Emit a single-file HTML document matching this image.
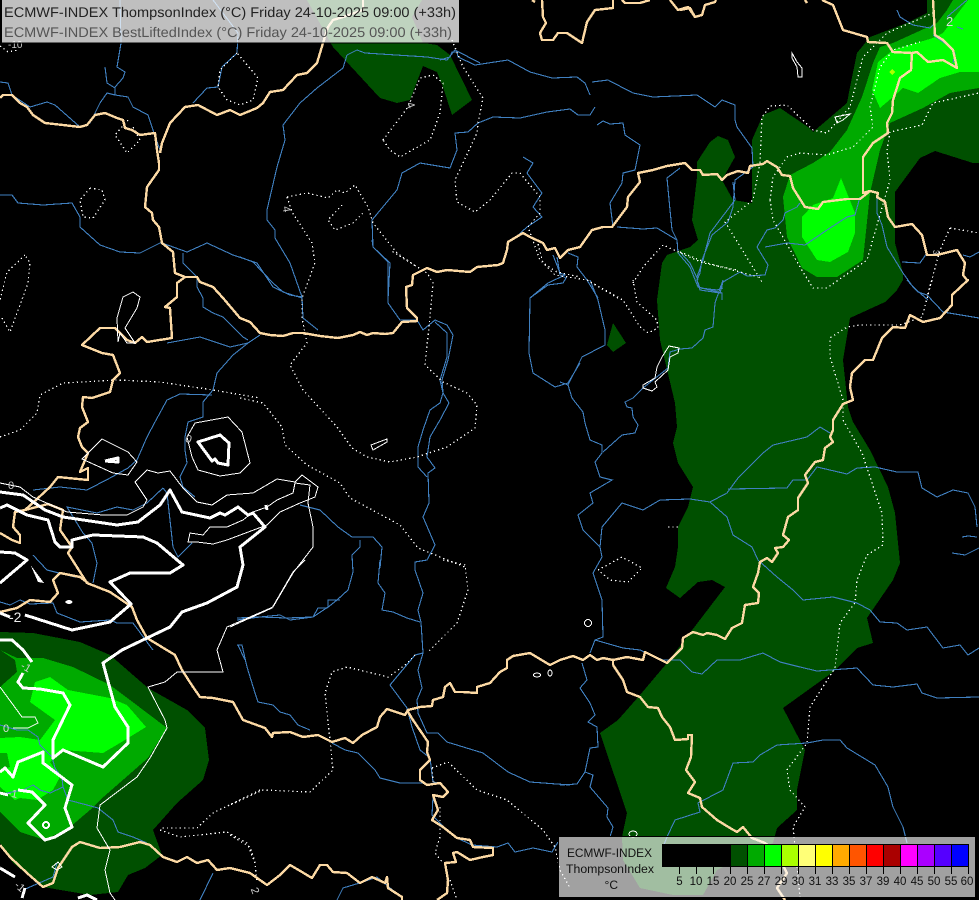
<!DOCTYPE html>
<html><head><meta charset="utf-8"><title>ECMWF-INDEX ThompsonIndex</title>
<style>
html,body{margin:0;padding:0;background:#000;width:979px;height:900px;overflow:hidden}
svg{display:block}
text{font-family:"Liberation Sans",sans-serif}
.b polyline{fill:none;stroke:#fcd9a4;stroke-width:2.4;stroke-linejoin:round}
.r polyline{fill:none;stroke:#4080c0;stroke-width:1.1}
.tk polyline,.tk polygon{fill:none;stroke:#fff;stroke-width:3;stroke-linejoin:round}
.tn polyline,.tn polygon{fill:none;stroke:#fff;stroke-width:1}
.d polyline{fill:none;stroke:#fff;stroke-width:1.3;stroke-dasharray:1.3 3}
.l text{fill:#ccc;font-size:11px}
</style></head><body>
<svg width="979" height="900" viewBox="0 0 979 900" xmlns="http://www.w3.org/2000/svg" shape-rendering="crispEdges">
<rect width="979" height="900" fill="#000"/>
<!-- dark green -->
<g fill="#005000">
<polygon points="307,0 422,0 412,17 423,43 437,45 450,55 472,100 452,115 443,87 437,72 423,66 410,100 397,103 380,98 333,47"/>
<polygon points="927,0 927,13 907,23 870,37 857,53 850,87 847,103 813,132 808,127 780,108 763,115 752,140 752,203 733,200 722,180 735,157 728,140 718,136 710,142 697,162 697,177 692,220 698,240 690,247 667,255 662,263 657,300 660,340 675,403 677,427 673,443 678,463 693,487 688,507 678,527 678,547 675,567 666,588 680,598 698,582 712,580 725,587 667,663 640,695 618,720 600,733 627,813 622,837 623,860 640,888 673,895 703,895 717,870 773,843 777,828 797,810 797,790 805,750 783,708 833,672 857,648 873,643 867,618 893,580 900,563 895,513 888,487 870,450 853,422 848,407 843,360 850,318 885,302 897,290 903,280 903,273 895,243 895,192 920,158 935,151 973,163 979,163 979,0"/>
<polygon points="613,323 626,343 613,352 607,345"/>
<polygon points="0,632 33,633 80,642 110,655 148,688 187,710 205,728 209,760 203,780 177,803 153,830 162,855 145,868 128,875 118,892 90,895 43,887 13,863 0,843"/>
</g>
<!-- mid green -->
<g fill="#00aa00">
<polygon points="953,0 947,10 937,23 893,43 880,47 873,63 862,97 847,130 830,152 813,163 790,175 783,197 787,237 802,268 817,277 837,277 863,260 870,193 880,150 890,123 923,108 950,93 967,90 979,88 979,0"/>
<polygon points="0,650 17,658 43,658 73,667 110,685 130,700 167,728 148,758 100,800 90,810 70,827 45,840 20,832 0,812"/>
</g>
<polygon fill="#005000" points="0,650 15,660 17,672 0,687"/>
<!-- bright -->
<g fill="#00ff00">
<polygon points="968,0 943,33 933,38 893,50 878,62 872,90 880,108 893,97 903,88 918,93 940,78 960,72 979,72 979,0"/>
<polygon points="841,178 833,198 813,205 802,217 802,237 817,260 830,262 848,252 855,233 855,213"/>
<polygon points="35,682 50,677 68,690 110,698 127,705 146,727 120,743 103,753 63,750 50,762 60,777 53,790 37,800 20,798 15,800 0,787 0,770 10,767 7,753 0,753 0,738 20,737 40,740 55,720 30,702"/>
</g>
<polygon fill="#aaff00" points="892,69 895,72 892,75 889,72"/>

<!-- rivers -->
<g class="r">
<polyline points="0,82 8,83 12,95 30,107 47,102 55,105 80,127 90,123 100,103 107,93 115,95 128,97 133,107 148,115 153,130 160,150"/>
<polyline points="115,95 115,87 123,78 125,72 117,67 121,43 120,0"/>
<polyline points="105,67 107,83 115,88"/>
<polyline points="193,103 207,88 218,87 222,67 237,53 238,33 213,0"/>
<polyline points="0,195 12,195 18,203 43,205 72,203 80,217 80,227 100,245 120,252 140,253 160,243 162,243 187,252 207,243 233,255 257,263 273,287 290,295 302,297"/>
<polyline points="183,253 183,263 197,277 197,287 203,298 203,307 213,313 223,317 233,327 243,337 248,340"/>
<polyline points="167,343 200,337 230,347 248,343 260,335"/>
<polyline points="248,343 233,355 217,373 213,390 203,402 203,417 188,422 185,437 185,450 187,463 180,477 183,487 195,497"/>
<polyline points="212,395 180,394 167,400 155,422 147,437 137,460 128,468 110,478 87,490 60,487 33,490"/>
<polyline points="163,488 147,503 133,510 117,507 97,513 67,507 83,533 92,543 97,563 93,583"/>
<polyline points="163,488 167,493 173,547 178,557 192,543"/>
<polyline points="0,602 10,605 20,600 30,604 53,603 57,613 80,622 110,620 117,623 133,623 147,642 153,650"/>
<polyline points="33,555 47,570 75,577"/>
<polyline points="237,620 260,617 287,618 313,617 328,607 328,600 340,600"/>
<polyline points="300,505 320,510 338,527 352,537 373,537 382,547 380,568"/>
<polyline points="360,540 360,547 352,555 353,572 348,590 337,600 327,608 318,608 313,617 290,620 280,615 260,617 237,618"/>
<polyline points="380,560 378,583 385,593 382,610 393,612 407,618 420,622"/>
<polyline points="372,240 373,247 388,262 388,303 400,320 417,320 423,330 435,320 447,325 453,335 448,360 442,380 443,393 449,403 440,420 430,437 427,457 435,468 428,473 429,503 423,517 435,545 427,560 415,562 415,570 423,593 418,610 421,622 423,653 418,670 422,688 417,700 418,713 427,733 438,733 447,742 483,753 508,772 530,782 570,785"/>
<polyline points="435,322 447,333 447,357 440,380 443,393 440,403 430,410 423,430 418,447 418,467 427,477"/>
<polyline points="415,655 390,685 407,708 412,727 420,750 430,758 433,782 440,783"/>
<polyline points="423,653 415,655"/>
<polyline points="237,645 242,645 247,667 255,693 258,702 273,705 280,712 290,715 298,725 310,730"/>
<polyline points="332,743 345,750 358,753 375,770 380,778 400,783 423,783"/>
<polyline points="433,797 432,815 447,830 457,838 472,845 497,847 508,843 515,852 533,848 552,852 558,842"/>
<polyline points="337,900 343,888 363,882 377,877 390,888 402,897"/>
<polyline points="553,255 560,273 565,275 548,283 530,298 529,353 533,373 555,387 568,383 580,363"/>
<polyline points="560,382 568,385 582,357 605,345 605,330 598,300 590,280"/>
<polyline points="568,385 572,398 583,412 585,423 590,440 602,445 602,453 595,462 600,477 612,480 590,493 593,503 578,515 583,530 600,547 602,557 593,573 602,600 603,637 595,640 590,653"/>
<polyline points="600,547 602,527 622,503 643,510 660,500 690,499 710,502 727,493 738,478 763,453 773,445 807,437 820,427 830,433"/>
<polyline points="728,489 787,488 793,480 807,480 817,467 847,474 857,468 875,467 897,472 918,472 922,488 937,497 953,490 968,493 975,507 977,527"/>
<polyline points="962,537 968,536 977,537"/>
<polyline points="952,553 965,555 979,548"/>
<polyline points="710,502 727,517 733,535 752,547 758,560 777,577 793,590 803,600 833,597 857,603 870,610 880,622 897,623 907,630 927,627 943,648 960,645 968,655 979,648"/>
<polyline points="595,640 623,648 640,650 663,660 680,660 692,672 702,674 717,660 740,660 763,653 780,662 800,667 817,671 857,668 873,685 893,687 917,684 922,693 937,698 979,697"/>
<polyline points="582,663 587,680 580,688 590,703 595,715 588,722 597,727 598,747 590,748 585,772 593,775 590,787 608,808 607,817 613,827 610,837"/>
<polyline points="560,785 577,784 585,772"/>
<polyline points="807,743 777,745 760,755 753,762 733,763 723,790 698,803 700,812 675,820 667,837 663,847"/>
<polyline points="807,743 823,740 840,740 847,748 875,765 888,787 893,807 903,827 907,843"/>
<polyline points="440,60 450,57 452,52 457,52 458,57 475,65 508,60 530,72 552,78 577,77 585,83 590,95"/>
<polyline points="592,82 608,80 633,93 653,97 697,95 715,107 722,100 735,105 735,120 737,127 752,148 753,167 735,180 733,207 728,222 712,235 702,260 700,273 697,280 700,290 720,293 723,282 740,272 747,276 765,275 768,265 757,247 767,230 775,228 783,220 785,213 797,207 800,203"/>
<polyline points="347,55 357,50 365,53 427,57 447,60 455,50 480,63"/>
<polyline points="347,55 343,68 317,88 300,103 283,125 285,140 277,167 267,210 267,220 275,230 275,238 290,263 302,297 303,318 318,330"/>
<polyline points="240,257 253,262 273,283 283,292 302,298"/>
<polyline points="372,220 373,247 390,263 388,300"/>
<polyline points="372,220 397,190 402,173 420,163 450,168 457,150 455,133 468,132 478,123 493,117 520,118 547,112 570,109 578,115 590,115 595,107"/>
<polyline points="597,125 603,121 610,124 623,123 625,135 640,145 635,170 623,173 622,183 610,203 613,227"/>
<polyline points="523,157 533,163 527,173 542,193 533,207 542,217 527,227 515,238"/>
<polyline points="617,227 643,229 657,228 677,240 678,253 690,267 698,287 722,293 722,300"/>
<polyline points="680,168 667,178 670,210 672,230 677,240"/>
<polyline points="733,182 735,200 710,233 703,260 697,277"/>
<polyline points="557,257 560,275 566,278 563,283 548,285 530,298"/>
<polyline points="568,253 578,257 577,267 587,280 598,298"/>
<polyline points="680,252 690,263 698,280"/>
<polyline points="765,247 787,243 805,245 827,230 847,217 855,215 860,197"/>
<polyline points="877,197 877,213 882,225 887,247 903,273 913,287 928,300"/>
<polyline points="907,280 918,292 927,295 943,312 979,318"/>
<polyline points="963,255 970,257 979,252"/>
<polyline points="902,262 920,263 927,253"/>
<polyline points="723,280 715,303 713,327 705,330 703,338 692,348 680,349 670,352 668,368 653,380 643,388 633,398 625,402 627,407 632,408 633,417 638,425 635,433 622,435 603,452"/>
<polyline points="697,280 700,288 717,290 723,288"/>
<polyline points="897,10 900,17 913,25 930,28 935,23"/>
<polyline points="933,35 950,47 955,53 953,63"/>
<polyline points="947,17 967,0"/>
<polyline points="957,27 963,29"/>
<polyline points="0,725 17,730 28,730 38,737 40,745 52,757 55,768 62,778 63,787 50,793 40,790 33,785 23,790 7,793 0,793"/>
<polyline points="63,787 68,800 87,805 98,808 113,820 118,832 133,837 147,843"/>
<polyline points="57,863 53,877 23,890"/>
<polyline points="213,873 200,900"/>
<polyline points="238,645 245,660"/>
</g>

<!-- dotted -->
<g class="d">
<polyline points="237,53 220,70 218,87 227,100 240,105 253,100 258,78 237,53"/>
<polyline points="128,120 115,135 127,153 140,140 133,127"/>
<polyline points="90,188 80,200 83,217 93,218 105,200 102,190 90,188"/>
<polyline points="25,255 7,272 0,300"/>
<polyline points="2,318 10,332 28,283 30,263 25,255"/>
<polyline points="287,197 307,193 328,198 337,190 345,193 355,185 368,207 373,223 397,253 417,267"/>
<polyline points="342,205 328,220 335,230 353,223 363,213"/>
<polyline points="287,197 292,212 312,243 315,263 302,298 302,318 307,343 290,365 303,390 337,427 352,448 367,457 390,462 417,457 447,447 475,428 477,405 467,393 443,382 425,365 430,317 433,283 427,273 390,250"/>
<polyline points="383,140 408,107 420,78 433,75 443,83 440,113 430,140 400,157 390,150 383,140"/>
<polyline points="452,40 463,67 483,98 478,123 477,133 455,180 457,202 475,212 490,200 512,173 520,173 540,197 540,213 528,227 540,260 555,275 587,280 618,298"/>
<polyline points="537,240 543,263 557,272 580,277"/>
<polyline points="633,283 643,267 663,245 703,263 737,270"/>
<polyline points="587,280 623,300 640,327 648,333 658,328 657,320 637,302 633,280"/>
<polyline points="760,163 762,117 770,106 787,105 813,130 827,133 850,107 863,57 887,33 933,13"/>
<polyline points="760,163 753,200 725,222 762,282"/>
<polyline points="680,252 707,263 740,272 758,277"/>
<polyline points="770,200 773,177 787,157 800,153 827,155 853,147 873,127 870,107 880,67 893,50 920,42"/>
<polyline points="770,200 773,220 800,267 813,288 827,288 867,260 890,180 887,150 890,132 922,125 933,103 979,93"/>
<polyline points="950,228 940,250 927,297"/>
<polyline points="950,228 979,233"/>
<polyline points="932,280 922,317 900,325 860,325 847,327 830,338 830,357 843,400 843,420 862,453 882,513 883,545 867,555 857,580 855,603 840,623 835,668 810,707 807,743 787,770 790,790 805,807 793,827 800,897"/>
<polyline points="668,527 680,527"/>
<polyline points="598,570 622,557 642,568 628,582 610,580 598,570"/>
<polyline points="443,560 465,565 468,590 457,623 427,653"/>
<polyline points="240,398 263,403 282,427 285,445 307,465 340,483 350,498 400,525 418,548 467,568"/>
<polyline points="0,437 20,430 37,413 40,395 63,383 117,380 160,382 213,390 260,398"/>
<polyline points="415,655 405,665 388,677 347,667 332,672 325,693 330,740 333,770 310,792 263,790 230,805"/>
<polyline points="230,835 250,847 255,862 257,883"/>
<polyline points="260,790 213,813 197,828 160,828"/>
<polyline points="160,830 180,837 227,832 247,843 255,863"/>
<polyline points="432,768 448,762 477,790 507,800 543,830 555,847 560,870 570,888"/>
<polyline points="440,807 440,837 435,853 443,863"/>
<polyline points="450,880 457,900"/>
<polyline points="432,768 433,782"/>
<polyline points="0,46 8,52 18,50"/>
</g>

<!-- borders -->
<g class="b">
<polyline points="0,98 3,95 12,95 20,103 27,107 33,115 45,123 63,125 80,127 87,125 95,115 105,113 117,118 123,120 125,128 132,130 140,135 155,133 157,150 159,163 159,170 147,187 145,207 152,213 153,220 159,227 162,243 173,252 175,273 185,277 197,277 200,282 213,287 223,298 240,318 250,322 260,333 270,335 283,336 293,333 303,333 320,336 338,338 353,335 360,332 367,335 373,333 385,334 393,333 402,322 417,321 417,318 407,308 406,287 412,285 413,275 427,268 437,272 447,270 470,272 477,267 498,265 503,263 507,250 508,242 523,233 530,237 543,243 547,250 555,248 560,258 568,250 580,247 592,230 603,227 612,227 627,207 628,197 640,182 638,173 653,170 667,166 685,163 692,170 700,170 703,175 717,174 722,180 727,175 738,171 748,173 750,166 763,164 767,161 777,167 782,175 790,176 793,188 805,207 818,209 823,202 847,199 860,199 870,191 878,193 877,197 885,202 888,217 895,227 912,224 922,235 927,255 937,255 957,250 965,263 963,275 967,280 968,280 952,295 952,305 940,318 923,322 910,315 905,328 893,327 882,338 873,360 865,360 852,373 850,387 853,400 843,404 833,420 833,430 830,437 833,442 825,448 823,460 815,462 805,475 808,483 798,498 798,510 788,517 783,535 789,540 783,547 775,548 778,553 772,562 767,558 760,562 758,573 753,587 759,593 758,603 745,605 742,623 732,628 725,639 717,635 707,633 703,635 693,632 683,638 682,648 667,663 657,658 645,652 643,660 627,657 613,660 603,658 597,660 590,655 583,660 573,656 560,660 550,665 530,653 513,656 507,660 507,668 500,672 490,683 477,687 477,693 463,692 455,692 450,683 445,687 443,697 433,700 432,706 420,707 408,710 405,715 387,709 380,717 377,727 362,735 353,743 345,738 332,742 318,735 303,737 290,732 273,733 272,737 265,728 243,720 233,702 213,698 200,697 193,687 182,670 175,655 147,638 137,620 132,607 110,592 87,583 68,553 72,547 60,530 63,510 48,504 25,510 50,487 58,477 88,480 88,468 80,472 88,453 82,447 78,437 80,428 88,422 82,407 83,397 92,398 110,392 113,380 120,373 113,355 102,353 82,345 100,328 115,328 127,340 135,343 142,337 147,342 172,338 170,308 165,307 177,297 177,283 185,277"/>
<polyline points="0,533 12,540 20,543 20,535 13,527 15,512 25,510"/>
<polyline points="0,612 17,608 30,600 50,602 58,593 53,580 60,573 80,577 88,583"/>
<polyline points="613,665 623,680 627,692 640,697 648,707 658,708 662,717 670,727 675,740 688,739 688,735 692,735 691,757 686,770 695,782 688,793 700,798 702,807 717,820 730,828 737,832 743,827 752,838 765,843 775,850 787,873 777,888 785,900"/>
<polyline points="613,660 613,665"/>
<polyline points="0,845 10,857 27,873 43,887 53,883 58,868 72,847 80,842 100,848 120,847 140,842 150,845 163,857 177,862 187,857 197,863 208,860 217,870 230,868 250,873 267,885 280,875 290,865 302,872 312,878 320,865 327,865 333,872 347,873 360,883 372,877 385,883 387,877 388,888 402,897 402,900"/>
<polyline points="407,710 413,720 428,742 427,752 430,760 420,770 420,780 427,785 440,783 448,792 443,797 433,795 438,810 432,820 443,827 457,838 470,840 473,847 493,848 493,855 483,857 470,860 457,852 453,853 456,862 445,863 448,880 447,893 437,900"/>
<polyline points="822,0 833,5 843,30 867,37 868,42 887,43 893,52 912,53 917,52 928,62 943,60 957,68 953,50 943,40 935,35 933,0"/>
<polyline points="912,53 911,70 900,78 893,100 892,113 887,123 888,133 873,143 863,157 863,193 870,191"/>
<polyline points="680,10 690,8 695,17 702,15 705,5 715,2 716,0"/>
<polyline points="532,0 535,2"/>
<polyline points="805,0 807,3"/>
<polyline points="542,0 543,17 546,23 540,33 542,40 553,40 558,33 567,33 582,43 587,22 595,10 613,8 613,0"/>
<polyline points="622,0 625,3 640,3 650,0"/>
<polyline points="670,0 678,10 688,7 695,17"/>
<polyline points="363,0 363,10 343,17 333,20 328,27 323,43 317,63 307,73 297,75 283,90 270,92 263,103 257,108 240,115 230,110 217,115 198,105 185,107 170,123 162,143 160,153"/>
</g>

<!-- thick white contours -->
<g class="tk">
<polyline points="0,492 23,495 45,510 63,517 117,525 138,522 147,515 160,505 170,490 182,512 210,518 220,513 225,515 238,507 248,515 253,513 265,527 240,547 243,565 237,587 207,603 182,612 170,627 147,638 122,650 103,663 115,707 128,727 128,743 103,767 63,750 53,758 53,740 70,705 63,693 40,689 23,688 18,682 23,673"/>
<polyline points="0,508 7,505 27,515 48,520 55,542 60,547 72,547 72,540 93,535 143,537 157,543 183,565 170,573 130,573 110,582 131,604 110,622 72,630 25,615"/>
<polyline points="0,552 15,553 27,560 0,583"/>
<polyline points="0,613 10,617"/>
<polygon points="198,442 220,435 229,443 228,465 218,463 215,459 212,461"/>
<polyline points="105,461 118,458 118,462 105,461"/>
<polyline points="0,640 12,640 23,650 32,662"/>
<polyline points="0,772 5,768 13,777 18,762 43,752 43,763 72,785 65,808 72,827 55,837 45,840 28,823 45,805 32,792 18,790"/>
<polyline points="0,868 15,877"/>
<polyline points="22,898 25,888"/>
<polyline points="78,898 87,895 97,900"/>
<polyline points="0,793 8,795"/>
<polyline points="266,505 267,510"/>
</g>
<polygon fill="#fff" points="31,566 38,582 44,583 32,567"/>
<ellipse cx="69" cy="602" rx="3.5" ry="2" fill="#fff"/>
<circle cx="46" cy="825" r="3" fill="none" stroke="#fff" stroke-width="2"/>

<!-- thin white contours -->
<g class="tn">
<polygon points="82,459 102,439 128,452 137,462 128,475 113,473"/>
<polyline points="0,483 20,487 33,497 67,512 103,515 127,515 143,507 147,500 135,482 147,470 158,473 170,471 183,488 197,502 212,505 227,495 253,493 277,479 295,482 302,475 318,487 315,497 300,503 280,512 267,525 227,540 213,544 197,542 188,542 190,533 203,535 210,527 227,527 243,520 253,512 267,507 277,500 293,493 295,483 310,485 308,503 313,527 313,547 293,573 273,607 227,627 217,650 223,672 193,672 177,672 165,682 148,687 165,720 167,728 150,758 137,777 100,805 97,828 110,850 105,870 110,893 115,900"/>
<polyline points="230,627 272,608 293,572 305,560"/>
<polygon points="187,437 195,423 228,417 242,432 250,463 240,473 220,476 198,470 192,457"/>
<polyline points="0,687 22,717 35,717 38,723 28,728 13,728"/>
<polygon points="52,867 58,862 62,867 57,870"/>
<polygon points="792,53 797,62 802,68 802,77 798,77 797,67 792,58"/>
<polygon points="835,117 850,114 843,120 837,123"/>
<polygon points="669,346 679,348 678,353 670,357 668,370 655,382 657,387 652,391 643,388 643,385 655,378 657,367 662,357"/>
<polygon points="371,445 387,439 387,442 373,450"/>
<polygon points="133,292 140,297 137,308 125,328 135,343 127,343 120,333 118,342 117,318 123,297"/>
<ellipse cx="537" cy="675" rx="3.5" ry="2" fill="none" stroke="#fff"/>
<ellipse cx="550" cy="673" rx="2" ry="3" fill="none" stroke="#fff"/>
<ellipse cx="633" cy="834" rx="4" ry="3" fill="none" stroke="#fff"/>
</g>
<g fill="none" stroke="#fff"><circle cx="588" cy="623" r="3.5"/></g>

<!-- contour labels -->
<g class="l">
<text x="8" y="489">0</text>
<text x="186" y="443" transform="rotate(20 190 438)">0</text>
<text x="9" y="622" style="fill:#eee;font-size:14px">-2</text>
<text x="22" y="670" transform="rotate(30 25 665)">-1</text>
<text x="3" y="732" style="fill:#ddd">0</text>
<text x="8" y="797" transform="rotate(10 12 792)">-1</text>
<text x="16" y="890" transform="rotate(40 20 885)">-1</text>
<text x="252" y="897" transform="rotate(70 257 892)">2</text>
<text x="946" y="26" style="fill:#ddd;font-size:13px">2</text>
<text x="284" y="213" transform="rotate(80 287 209)">4</text>
<text x="408" y="109" transform="rotate(70 411 105)">4</text>
<text x="8" y="48" style="font-size:10px">-10</text>
<text x="933" y="258" transform="rotate(90 937 254)" style="font-size:8px">3</text>
</g>

<!-- header panel -->
<rect x="1.5" y="-2" width="458" height="45" fill="#fff" fill-opacity=".75" stroke="#000"/>
<text x="4" y="17" font-size="14" fill="#222" textLength="452" lengthAdjust="spacingAndGlyphs" text-rendering="geometricPrecision">ECMWF-INDEX ThompsonIndex (°C) Friday 24-10-2025 09:00 (+33h)</text>
<text x="4" y="37" font-size="14" fill="#555" textLength="448" lengthAdjust="spacingAndGlyphs" text-rendering="geometricPrecision">ECMWF-INDEX BestLiftedIndex (°C) Friday 24-10-2025 09:00 (+33h)</text>

<!-- legend panel -->
<rect x="558.5" y="836.5" width="417" height="61" fill="#fff" fill-opacity=".63" stroke="#000"/>
<rect x="662" y="844" width="307" height="23" fill="#000"/>
<g>
<rect x="663" y="845" width="16" height="21" fill="#000"/>
<rect x="731" y="845" width="16" height="21" fill="#005000"/>
<rect x="748" y="845" width="16" height="21" fill="#00aa00"/>
<rect x="765" y="845" width="16" height="21" fill="#00ff00"/>
<rect x="782" y="845" width="16" height="21" fill="#aaff00"/>
<rect x="799" y="845" width="16" height="21" fill="#ffff77"/>
<rect x="816" y="845" width="16" height="21" fill="#ffff00"/>
<rect x="833" y="845" width="16" height="21" fill="#ffaa00"/>
<rect x="850" y="845" width="16" height="21" fill="#ff5500"/>
<rect x="867" y="845" width="16" height="21" fill="#ff0000"/>
<rect x="884" y="845" width="16" height="21" fill="#aa0000"/>
<rect x="901" y="845" width="16" height="21" fill="#ff00ff"/>
<rect x="918" y="845" width="16" height="21" fill="#aa00ff"/>
<rect x="935" y="845" width="16" height="21" fill="#5500ff"/>
<rect x="952" y="845" width="16" height="21" fill="#0000ff"/>
</g>
<path d="M679.5 867V874M696.5 867V874M713.5 867V874M730.5 867V874M747.5 867V874M764.5 867V874M781.5 867V874M798.5 867V874M815.5 867V874M832.5 867V874M849.5 867V874M866.5 867V874M883.5 867V874M900.5 867V874M917.5 867V874M934.5 867V874M951.5 867V874M968.5 867V874" stroke="#000" fill="none"/>
<g font-size="11.5" fill="#111" text-anchor="end">
<text x="652" y="857" textLength="85" lengthAdjust="spacingAndGlyphs">ECMWF-INDEX</text>
<text x="654" y="873" textLength="88" lengthAdjust="spacingAndGlyphs">ThompsonIndex</text>
<text x="618" y="889" font-size="12">°C</text>
</g>
<g font-size="11.5" fill="#111" text-anchor="middle">
<text x="679.5" y="885">5</text><text x="696" y="885">10</text><text x="713" y="885">15</text><text x="730" y="885">20</text><text x="747" y="885">25</text><text x="764" y="885">27</text><text x="781" y="885">29</text><text x="798" y="885">30</text><text x="815" y="885">31</text><text x="832" y="885">33</text><text x="849" y="885">35</text><text x="866" y="885">37</text><text x="883" y="885">39</text><text x="900" y="885">40</text><text x="917" y="885">45</text><text x="934" y="885">50</text><text x="951" y="885">55</text><text x="967" y="885">60</text>
</g>
</svg>
</body></html>
